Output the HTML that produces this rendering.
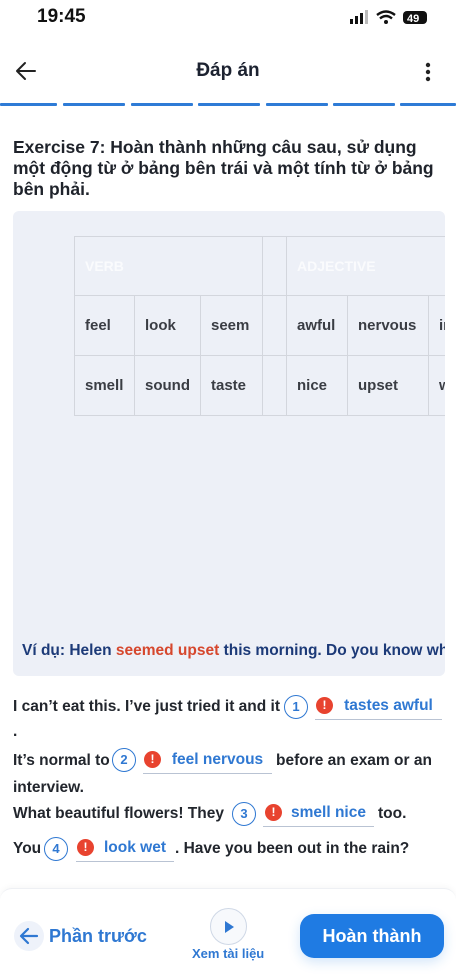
<!DOCTYPE html>
<html><head><meta charset="utf-8"><style>
*{margin:0;padding:0;box-sizing:border-box}
body{width:456px;height:979px;overflow:hidden;background:#fff;font-family:"Liberation Sans",Arial,sans-serif;color:#1f232b;position:relative}
.a{position:absolute;white-space:nowrap}
.seg{position:absolute;top:103px;height:3px;background:#2e7bd6;border-radius:1px}
.box{position:absolute;left:13px;top:211px;width:432px;height:465px;background:#edf0f7;border-radius:6px;overflow:hidden}
.tb{position:absolute;left:61px;top:25px}
.c{position:absolute;border:1.5px solid #d3d6dd;font-weight:bold;font-size:15px;color:#3a3d44;padding-left:10px;display:flex;align-items:center}
.s{font-weight:bold;font-size:15.5px;color:#22262d}
.num{position:absolute;width:24px;height:24px;border:1.5px solid #2f78d2;border-radius:50%;color:#2f78d2;font-size:13px;font-weight:bold;text-align:center;line-height:21px}
.ex{position:absolute;width:17px;height:17px;border-radius:50%;background:#e8432f;color:#fff;font-size:12px;font-weight:bold;text-align:center;line-height:17px}
.ans{position:absolute;color:#2f78d2;font-weight:bold;font-size:15.5px;border-bottom:1.5px solid #b9c3d3;padding-bottom:4px;text-align:center}
</style></head><body>
<div class="a" style="left:37px;top:6px;font-size:19px;font-weight:bold;color:#111">19:45</div>
<svg class="a" style="left:350px;top:10px" width="80" height="16">
<rect x="0" y="9" width="3" height="5" fill="#111"/><rect x="5" y="6" width="3" height="8" fill="#111"/><rect x="10" y="3" width="3" height="11" fill="#111"/><rect x="15" y="0" width="3" height="14" fill="#bbb"/>
<path d="M27 5 Q36 -2 45 5" stroke="#111" stroke-width="2.4" fill="none"/><path d="M30 8.5 Q36 3.5 42 8.5" stroke="#111" stroke-width="2.4" fill="none"/><circle cx="36" cy="12" r="2" fill="#111"/>
<rect x="53" y="1" width="24" height="13" rx="4" fill="#111"/><text x="57" y="12" font-size="11" font-weight="bold" fill="#fff" font-family="Liberation Sans">49</text></svg>
<svg class="a" style="left:15px;top:61px" width="22" height="20"><path d="M20 10H3M10 2L2 10L10 18" stroke="#222" stroke-width="2" fill="none" stroke-linecap="round" stroke-linejoin="round"/></svg>
<div class="a" style="left:0;width:456px;text-align:center;top:60px;font-size:19px;font-weight:bold;color:#1c2230">Đáp án</div>
<svg class="a" style="left:424px;top:62px" width="8" height="20"><circle cx="4" cy="3" r="2.2" fill="#222"/><circle cx="4" cy="10" r="2.2" fill="#222"/><circle cx="4" cy="17" r="2.2" fill="#222"/></svg>
<div class="seg" style="left:0;width:57px"></div><div class="seg" style="left:63px;width:62px"></div><div class="seg" style="left:131px;width:62px"></div><div class="seg" style="left:198px;width:62px"></div><div class="seg" style="left:266px;width:62px"></div><div class="seg" style="left:333px;width:62px"></div><div class="seg" style="left:400px;width:56px"></div>
<div class="a" style="left:13px;top:137px;font-size:17.5px;font-weight:bold;line-height:21px;color:#1f232b;white-space:normal;width:435px">Exercise 7: Hoàn thành những câu sau, sử dụng một động từ ở bảng bên trái và một tính từ ở bảng bên phải.</div>
<div class="box">
<div class="tb">
<div class="c" style="left:0;top:0;width:189px;height:60px;color:#fafbfd;font-size:14px">VERB</div>
<div class="c" style="left:188px;top:0;width:25px;height:60px"></div>
<div class="c" style="left:212px;top:0;width:200px;height:60px;color:#fafbfd;font-size:14px">ADJECTIVE</div>
<div class="c" style="left:0;top:59px;width:61px;height:61px">feel</div>
<div class="c" style="left:60px;top:59px;width:67px;height:61px">look</div>
<div class="c" style="left:126px;top:59px;width:63px;height:61px">seem</div>
<div class="c" style="left:188px;top:59px;width:25px;height:61px"></div>
<div class="c" style="left:212px;top:59px;width:62px;height:61px">awful</div>
<div class="c" style="left:273px;top:59px;width:82px;height:61px">nervous</div>
<div class="c" style="left:354px;top:59px;width:60px;height:61px">in</div>
<div class="c" style="left:0;top:119px;width:61px;height:61px">smell</div>
<div class="c" style="left:60px;top:119px;width:67px;height:61px">sound</div>
<div class="c" style="left:126px;top:119px;width:63px;height:61px">taste</div>
<div class="c" style="left:188px;top:119px;width:25px;height:61px"></div>
<div class="c" style="left:212px;top:119px;width:62px;height:61px">nice</div>
<div class="c" style="left:273px;top:119px;width:82px;height:61px">upset</div>
<div class="c" style="left:354px;top:119px;width:60px;height:61px">wet</div>
</div>
<div class="a" style="left:9px;top:431px;font-size:15.5px;font-weight:bold;color:#1c3a78">Ví dụ: Helen <span style="color:#d6472d">seemed upset</span> this morning. Do you know why?</div>
</div>
<div class="a s" style="left:13px;top:698px">I can’t eat this. I’ve just tried it and it</div>
<div class="num" style="left:284px;top:695px">1</div>
<div class="ex" style="left:316px;top:697px">!</div>
<div class="ans" style="left:315px;top:697px;width:127px;padding-left:20px">tastes awful</div>
<div class="a s" style="left:13px;top:723px">.</div>
<div class="a s" style="left:13px;top:752px">It’s normal to</div>
<div class="num" style="left:112px;top:748px">2</div>
<div class="ex" style="left:144px;top:751px">!</div>
<div class="ans" style="left:143px;top:751px;width:129px;padding-left:20px">feel nervous</div>
<div class="a s" style="left:276px;top:752px">before an exam or an</div>
<div class="a s" style="left:13px;top:779px">interview.</div>
<div class="a s" style="left:13px;top:805px">What beautiful flowers! They</div>
<div class="num" style="left:232px;top:802px">3</div>
<div class="ex" style="left:265px;top:804px">!</div>
<div class="ans" style="left:263px;top:804px;width:111px;padding-left:20px">smell nice</div>
<div class="a s" style="left:378px;top:805px">too.</div>
<div class="a s" style="left:13px;top:840px">You</div>
<div class="num" style="left:44px;top:837px">4</div>
<div class="ex" style="left:77px;top:839px">!</div>
<div class="ans" style="left:76px;top:839px;width:98px;padding-left:20px">look wet</div>
<div class="a s" style="left:175px;top:840px">. Have you been out in the rain?</div>
<div class="a" style="left:0;top:888px;width:456px;height:91px;background:#fff;border-top:1px solid #eef0f4;border-radius:12px 12px 0 0;box-shadow:0 -2px 6px rgba(0,0,0,0.03)"></div>
<div class="a" style="left:14px;top:921px;width:30px;height:30px;border-radius:50%;background:#eef2fa"></div>
<svg class="a" style="left:19px;top:926px" width="20" height="20"><path d="M18 10H3M9 3L2 10L9 17" stroke="#2f78d2" stroke-width="2.2" fill="none" stroke-linecap="round" stroke-linejoin="round"/></svg>
<div class="a" style="left:49px;top:926px;font-size:18px;font-weight:bold;color:#2f78d2">Phần trước</div>
<div class="a" style="left:210px;top:908px;width:37px;height:37px;border-radius:50%;border:1.5px solid #cfd8e6;background:#f7f9fc"></div>
<svg class="a" style="left:223px;top:920px" width="12" height="14"><path d="M2 1L11 7L2 13Z" fill="#2f78d2"/></svg>
<div class="a" style="left:192px;top:946px;font-size:13px;font-weight:bold;color:#2f78d2">Xem tài liệu</div>
<div class="a" style="left:300px;top:914px;width:144px;height:44px;border-radius:14px;background:#1f7be3;color:#fff;font-size:18px;font-weight:bold;text-align:center;line-height:44px;box-shadow:0 4px 12px rgba(31,123,227,0.2)">Hoàn thành</div>
</body></html>
